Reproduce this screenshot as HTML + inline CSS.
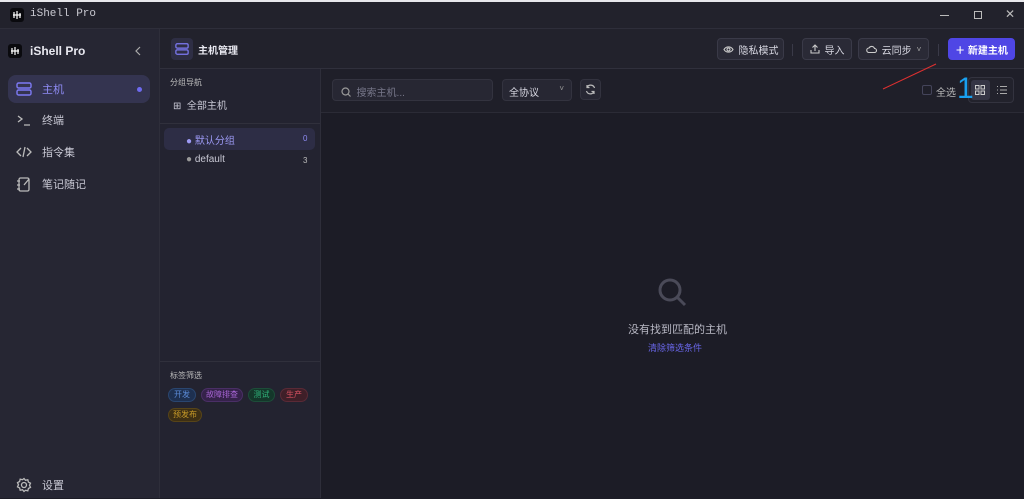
<!DOCTYPE html>
<html><head><meta charset="utf-8"><style>
*{margin:0;padding:0;box-sizing:border-box}
body{width:1024px;height:498px;overflow:hidden;background:#1c1c26;font-family:"Liberation Sans","Noto Sans CJK SC",sans-serif;color:#d6d6e0;position:relative;font-size:11px}
.abs{position:absolute}
.top{left:0;top:0;width:1024px;height:2px;background:#e8e8ec}
.title{left:0;top:2px;width:1024px;height:27px;background:#22222c;border-bottom:1px solid #2e2e3a}
.side{left:0;top:29px;width:160px;height:469px;background:#262633;border-right:1px solid #2e2e3a}
.mid{left:160px;top:69px;width:161px;height:429px;background:#232330;border-right:1px solid #2e2e3a}
.hdr{left:160px;top:29px;width:864px;height:40px;background:#22222c;border-bottom:1px solid #30303c}
.tb{left:321px;top:69px;width:703px;height:44px;background:#1f1f29;border-bottom:1px solid #2b2b36}
.logo{width:14px;height:14px;background:#0a0a0e;border-radius:3px}
.btn{height:22px;border:1px solid #3a3a48;background:#2a2a36;border-radius:4px;font-size:10px;color:#d8d8e2;display:flex;align-items:center;justify-content:center;gap:5px}
.nav{left:8px;width:142px;height:28px;display:flex;align-items:center;font-size:11px;color:#c8c8d4}
.nav svg{margin:0 10px 0 8px}
.tag{position:absolute;height:14px;border-radius:7px;font-size:8px;line-height:12px;text-align:center}
</style></head><body>
<div class="abs top"></div>
<div class="abs title">
 <div class="abs logo" style="left:10px;top:6px"><svg width="14" height="14" fill="none" stroke="#fff" stroke-width="1.2"><path d="M4 4v6M7 3v8M10 5v5M3 7h8"/></svg></div>
 <div class="abs" style="left:30px;top:6px;font-family:'Liberation Mono',monospace;font-size:11px;color:#c8c8d0">iShell Pro</div>
 <div class="abs" style="left:940px;top:13px;width:9px;height:1px;background:#bbb"></div>
 <div class="abs" style="left:974px;top:9px;width:8px;height:8px;border:1px solid #bbb"></div>
 <div class="abs" style="left:1005px;top:5px;color:#bbb;font-size:12px">✕</div>
</div>
<div class="abs side">
 <div class="abs logo" style="left:8px;top:15px"><svg width="14" height="14" fill="none" stroke="#fff" stroke-width="1.2"><path d="M4 4v6M7 3v8M10 5v5M3 7h8"/></svg></div>
 <div class="abs" style="left:30px;top:15px;font-size:12px;font-weight:bold;color:#e8e8f0">iShell Pro</div>
 <svg class="abs" style="left:134px;top:17px" width="8" height="10" fill="none" stroke="#aaa" stroke-width="1.2"><path d="M6 1L2 5l4 4"/></svg>
 <div class="abs nav" style="top:46px;background:#343450;border-radius:8px;color:#8f8cf5">
  <svg width="16" height="14" viewBox="0 0 16 14" fill="none" stroke="#7d7af5" stroke-width="1.4"><rect x="1" y="1" width="14" height="5" rx="1.5"/><rect x="1" y="8" width="14" height="5" rx="1.5"/></svg>主机
  <div class="abs" style="left:129px;top:12px;width:5px;height:5px;border-radius:50%;background:#6e6af0"></div></div>
 <div class="abs nav" style="top:77px"><svg width="16" height="14" viewBox="0 0 16 14" fill="none" stroke="#bbb" stroke-width="1.3"><path d="M2 3l4 3-4 3M8 12h6"/></svg>终端</div>
 <div class="abs nav" style="top:109px"><svg width="16" height="14" viewBox="0 0 16 14" fill="none" stroke="#bbb" stroke-width="1.3"><path d="M5 3L1 7l4 4M11 3l4 4-4 4M9 2L7 12"/></svg>指令集</div>
 <div class="abs nav" style="top:141px"><svg width="16" height="16" viewBox="0 0 16 16" fill="none" stroke="#bbb" stroke-width="1.3"><rect x="3" y="2" width="10" height="13" rx="1.5"/><path d="M1 5h3M1 9h3M1 13h3M8 9l5-6"/></svg>笔记随记</div>
 <div class="abs nav" style="top:442px"><svg width="16" height="16" viewBox="0 0 16 16" fill="none" stroke="#bbb" stroke-width="1.3"><circle cx="8" cy="8" r="2.5"/><path d="M8 1.5l1.5 1.8 2.3-.5.6 2.3 2.1 1.1-1 2.1 1 2.1-2.1 1.1-.6 2.3-2.3-.5L8 14.5l-1.5-1.8-2.3.5-.6-2.3-2.1-1.1 1-2.1-1-2.1 2.1-1.1.6-2.3 2.3.5z"/></svg>设置</div>
</div>
<div class="abs hdr">
 <div class="abs" style="left:11px;top:9px;width:22px;height:22px;background:#2e2e44;border-radius:4px"><svg style="margin:4px" width="14" height="14" viewBox="0 0 16 14" fill="none" stroke="#7d7af5" stroke-width="1.4"><rect x="1" y="1" width="14" height="5" rx="1.5"/><rect x="1" y="8" width="14" height="5" rx="1.5"/></svg></div>
 <div class="abs" style="left:38px;top:13px;font-size:10px;font-weight:bold;color:#e8e8f0">主机管理</div>
 <div class="abs btn" style="left:557px;top:9px;width:67px"><svg width="11" height="9" fill="none" stroke="#ccc" stroke-width="1.1"><path d="M1 4.5C3 1 8 1 10 4.5 8 8 3 8 1 4.5z"/><circle cx="5.5" cy="4.5" r="1.5"/></svg>隐私模式</div>
 <div class="abs" style="left:632px;top:15px;width:1px;height:12px;background:#3a3a48"></div>
 <div class="abs btn" style="left:642px;top:9px;width:50px"><svg width="10" height="10" fill="none" stroke="#ccc" stroke-width="1.1"><path d="M5 7V1M2.5 3.5L5 1l2.5 2.5M1 6v3h8V6"/></svg>导入</div>
 <div class="abs btn" style="left:698px;top:9px;width:71px"><svg width="11" height="8" fill="none" stroke="#ccc" stroke-width="1.1"><path d="M3 7.5h5.5a2 2 0 000-4A3 3 0 003 3a2.2 2.2 0 000 4.5z"/></svg>云同步 <span style="color:#aaa;font-size:8px">˅</span></div>
 <div class="abs" style="left:778px;top:15px;width:1px;height:12px;background:#3a3a48"></div>
 <div class="abs btn" style="left:788px;top:9px;width:67px;background:#4f46e5;border-color:#4f46e5;color:#fff;font-weight:bold">＋ 新建主机</div>
</div>
<div class="abs mid">
 <div class="abs" style="left:10px;top:8px;font-size:8px;color:#bbb">分组导航</div>
 <div class="abs" style="left:13px;top:28px;font-size:10px;color:#c8c8d4">⊞&nbsp;&nbsp;全部主机</div>
 <div class="abs" style="left:0;top:54px;width:160px;height:1px;background:#30303c"></div>
 <div class="abs" style="left:4px;top:59px;width:151px;height:22px;background:#2d2d45;border-radius:5px"></div>
 <div class="abs" style="left:26px;top:63px;font-size:10px;color:#9d9af5">● 默认分组</div>
 <div class="abs" style="left:143px;top:65px;font-size:8px;color:#8f8cf5">0</div>
 <div class="abs" style="left:26px;top:85px;font-size:10px;color:#c8c8d4"><span style="color:#999">●</span> default</div>
 <div class="abs" style="left:143px;top:87px;font-size:8px;color:#bbb">3</div>
 <div class="abs" style="left:0;top:292px;width:160px;height:1px;background:#30303c"></div>
 <div class="abs" style="left:10px;top:301px;font-size:8px;color:#bbb">标签筛选</div>
 <span class="tag" style="left:8px;top:319px;width:28px;background:#1e3050;border:1px solid #2a4670;color:#5b8ad6">开发</span>
 <span class="tag" style="left:41px;top:319px;width:42px;background:#35224a;border:1px solid #4a2f66;color:#a865d6">故障排查</span>
 <span class="tag" style="left:88px;top:319px;width:27px;background:#14372a;border:1px solid #1d4d39;color:#2fb27a">测试</span>
 <span class="tag" style="left:120px;top:319px;width:28px;background:#3f1f28;border:1px solid #5a2a36;color:#d25060">生产</span>
 <span class="tag" style="left:8px;top:339px;width:34px;background:#3d2f14;border:1px solid #574418;color:#c79a28">预发布</span>
</div>
<div class="abs tb">
 <div class="abs" style="left:11px;top:10px;width:161px;height:22px;background:#272733;border:1px solid #33333f;border-radius:4px;font-size:10px;color:#77778a;padding:4px 0 0 8px"><svg width="10" height="10" style="vertical-align:-1px" fill="none" stroke="#999" stroke-width="1.2"><circle cx="4.5" cy="4.5" r="3.5"/><path d="M7 7l2.5 2.5"/></svg>&nbsp; 搜索主机...</div>
 <div class="abs" style="left:181px;top:10px;width:70px;height:22px;background:#272733;border:1px solid #33333f;border-radius:4px;font-size:10px;color:#d8d8e2;padding:4px 0 0 6px">全协议<span style="position:absolute;right:7px;color:#999;font-size:8px">˅</span></div>
 <div class="abs" style="left:259px;top:10px;width:21px;height:21px;background:#272733;border:1px solid #33333f;border-radius:4px"><svg style="margin:4px" width="11" height="11" fill="none" stroke="#bbb" stroke-width="1.2"><path d="M9.5 4A4 4 0 002 3.5M1.5 7A4 4 0 009 7.5M2 1v2.5h2.5M9 10V7.5H6.5"/></svg></div>
 <div class="abs" style="left:601px;top:16px;width:10px;height:10px;border:1px solid #44445a;border-radius:2px"></div>
 <div class="abs" style="left:615px;top:15px;font-size:10px;color:#bbb">全选</div>
 <div class="abs" style="left:647px;top:8px;width:46px;height:26px;border:1px solid #33333f;border-radius:4px;background:#22222c"></div>
 <div class="abs" style="left:650px;top:11px;width:19px;height:20px;background:#353545;border-radius:3px"><svg style="margin:5px 4px" width="10" height="10" fill="none" stroke="#ccc" stroke-width="1"><rect x=".5" y=".5" width="3.5" height="3.5"/><rect x="6" y=".5" width="3.5" height="3.5"/><rect x=".5" y="6" width="3.5" height="3.5"/><rect x="6" y="6" width="3.5" height="3.5"/></svg></div>
 <svg class="abs" style="left:676px;top:16px" width="10" height="10" fill="none" stroke="#aaa" stroke-width="1"><path d="M3 1.5h7M3 5h7M3 8.5h7M0 1.5h1M0 5h1M0 8.5h1"/></svg>
 <div class="abs" style="left:636px;top:3px;font-size:30px;color:#19a0f0;line-height:34px;z-index:5">1</div>
 <svg class="abs" style="left:560px;top:-8px" width="60" height="30"><line x1="2" y1="28" x2="55" y2="3" stroke="#e03030" stroke-width="1"/></svg>
</div>
<svg class="abs" style="left:656px;top:276px" width="34" height="34" fill="none" stroke="#4a4a58" stroke-width="3"><circle cx="14" cy="14" r="10"/><path d="M21 21l8 8"/></svg>
<div class="abs" style="left:628px;top:321px;font-size:11px;color:#b8b8c4">没有找到匹配的主机</div>
<div class="abs" style="left:648px;top:341px;font-size:9px;color:#6966e8">清除筛选条件</div>
</body></html>
